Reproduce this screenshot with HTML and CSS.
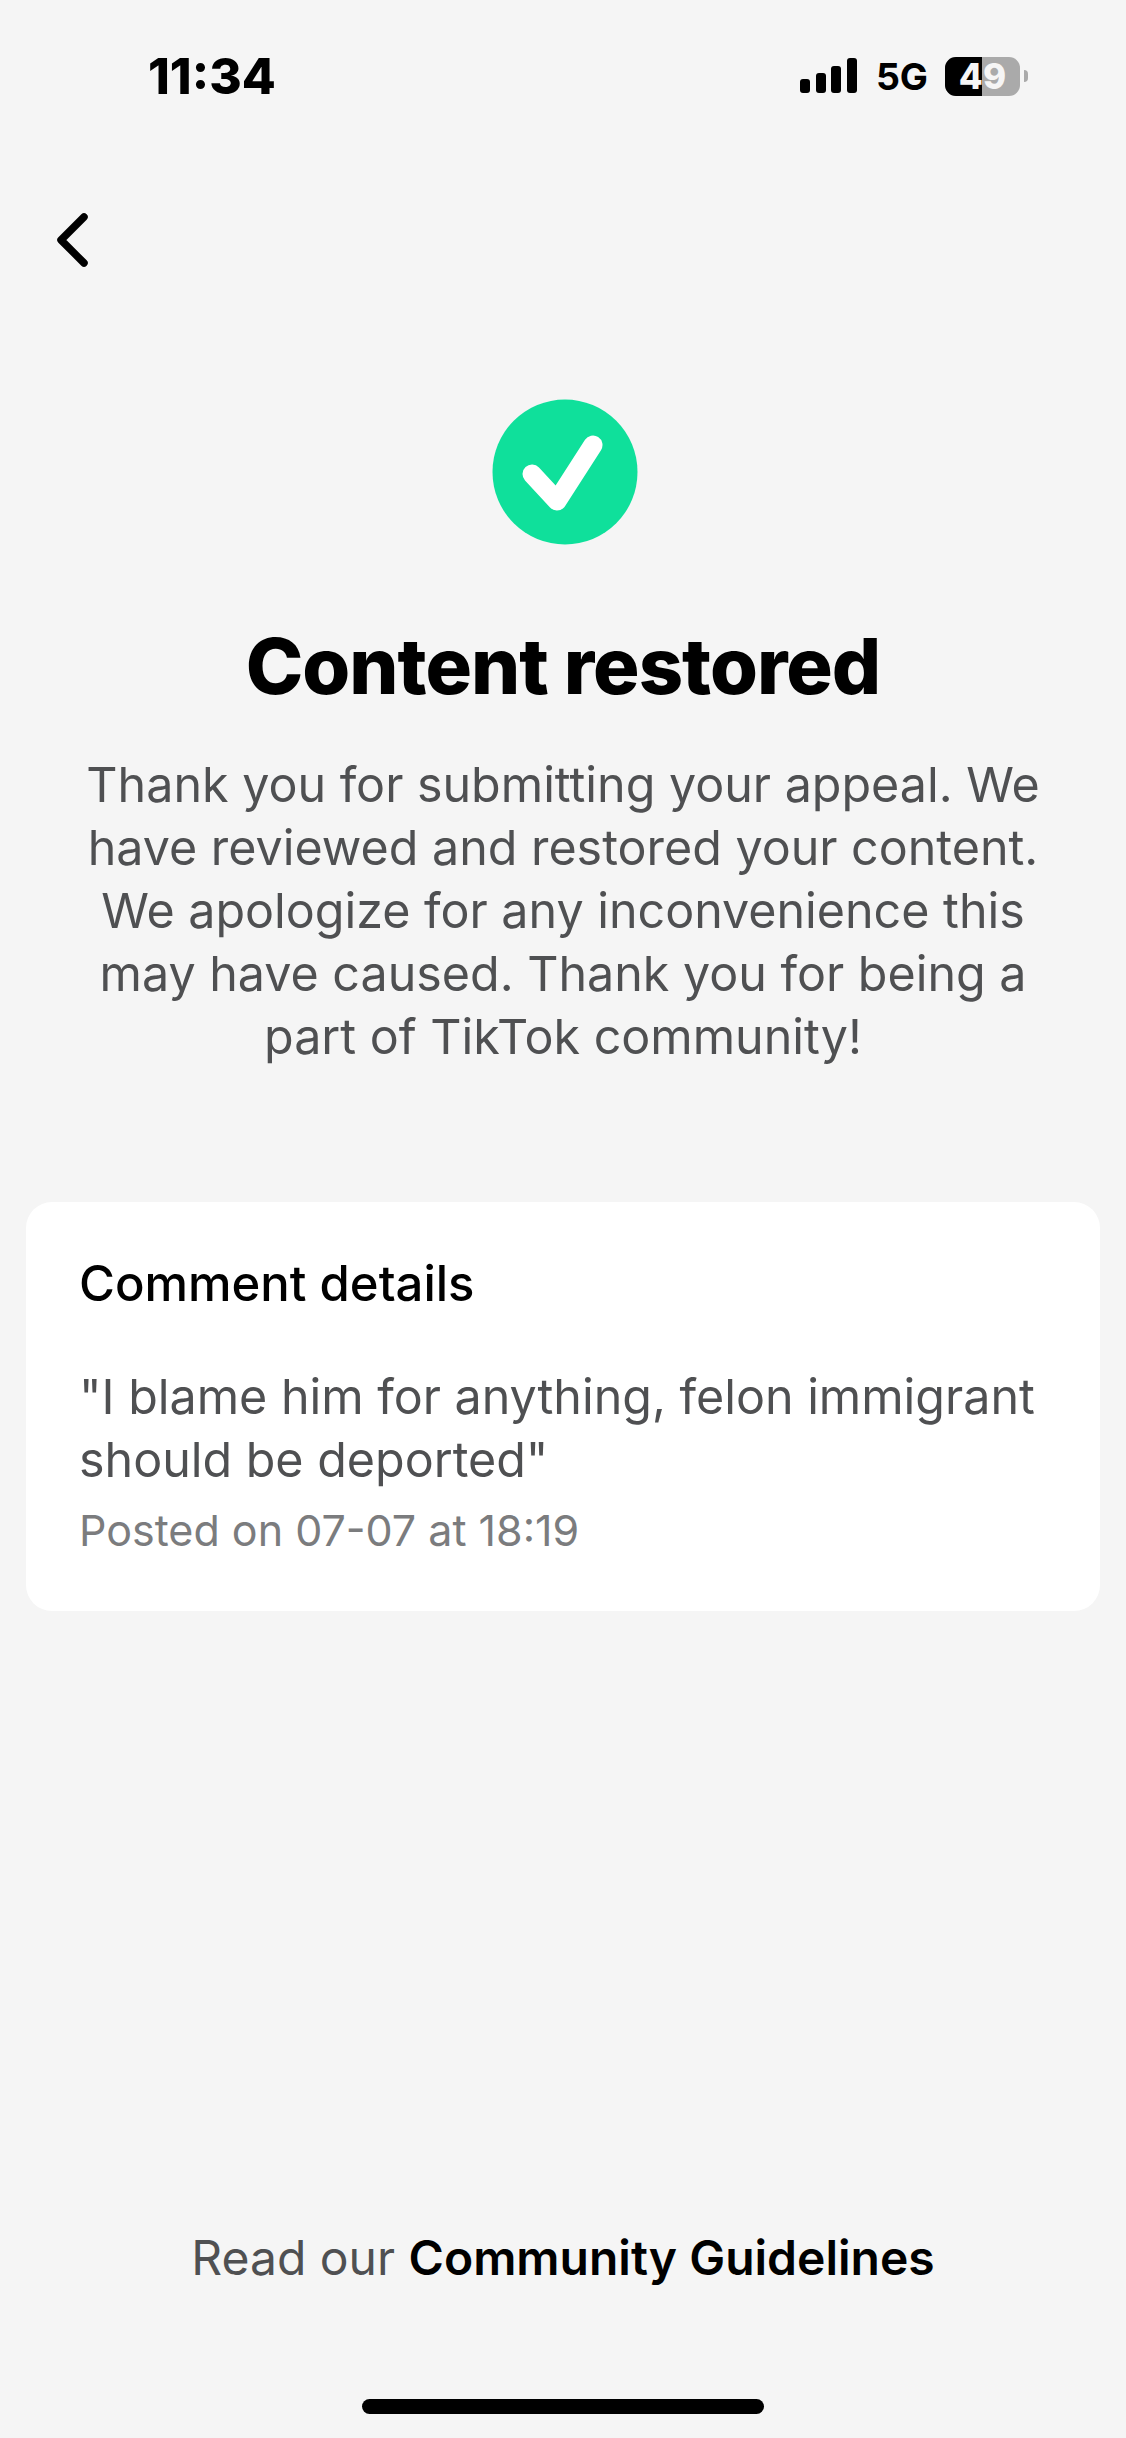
FILE: index.html
```html
<!DOCTYPE html>
<html lang="en">
<head>
    <meta charset="utf-8">
    <meta name="viewport" content="width=device-width, initial-scale=1, shrink-to-fit=no">
    <title>Content restored</title>
    <link rel="stylesheet" href="styles.css">
</head>
<body>
<div class="page">
    <div class="status-bar">
        <span class="time">11:34</span>
        <div class="status-icons">
            <svg class="signal" width="58" height="36" viewBox="0 0 58 36">
                <rect x="0" y="21" width="10" height="14" rx="3"/>
                <rect x="16" y="15" width="10" height="20" rx="3"/>
                <rect x="31" y="8" width="10" height="27" rx="3"/>
                <rect x="47" y="0" width="10" height="35" rx="3"/>
            </svg>
            <span class="network">5G</span>
            <div class="battery">
                <div class="battery-body">
                    <div class="battery-fill"></div>
                    <span class="battery-level">49</span>
                </div>
                <div class="battery-cap"></div>
            </div>
        </div>
    </div>

    <div class="nav-bar">
        <svg class="back" width="40" height="60" viewBox="0 0 40 60">
            <path d="M32 9 L9 32 L32 55" fill="none" stroke="#000" stroke-width="7.5" stroke-linecap="round" stroke-linejoin="round"/>
        </svg>
    </div>

    <div class="result">
        <svg class="check" width="146" height="146" viewBox="0 0 146 146">
            <circle cx="73" cy="73" r="72.5" fill="#0fe09b"/>
            <path d="M40 75 L65 102 L101 46" fill="none" stroke="#fff" stroke-width="19" stroke-linecap="round" stroke-linejoin="round"/>
        </svg>
        <h1>Content restored</h1>
        <p class="message">Thank you for submitting your appeal. We have reviewed and restored your content. We apologize for any inconvenience this may have caused. Thank you for being a part of TikTok community!</p>
    </div>

    <div class="card">
        <h2>Comment details</h2>
        <p class="comment">"I blame him for anything, felon immigrant should be deported"</p>
        <p class="posted">Posted on 07-07 at 18:19</p>
    </div>

    <div class="footer">
        <p class="guidelines">Read our <strong>Community Guidelines</strong></p>
        <div class="home-indicator"></div>
    </div>
</div>
</body>
</html>
```

FILE: styles.css
```css
* {
    box-sizing: border-box;
    margin: 0;
    font-family: Inter, "Liberation Sans", sans-serif;
}

body {
    background-color: #f5f5f5;
}

.page {
    display: flex;
    flex-direction: column;
    height: 2438px;
}

.status-bar {
    display: flex;
    justify-content: space-between;
    align-items: center;
    height: 56px;
    margin-top: 48px;
    padding: 0 98px 0 148px;
}

.time {
    font-size: 49.5px;
    font-weight: 800;
    color: #000;
}

.status-icons {
    display: flex;
    align-items: center;
}

.signal {
    margin-right: 18px;
}

.network {
    font-size: 37.5px;
    font-weight: 700;
    color: #000;
    margin-right: 17px;
}

.battery {
    display: flex;
    align-items: center;
}

.battery-body {
    position: relative;
    display: flex;
    justify-content: center;
    align-items: center;
    width: 75px;
    height: 39px;
    border-radius: 11px;
    background-color: #aaa;
    overflow: hidden;
}

.battery-fill {
    position: absolute;
    left: 0;
    top: 0;
    bottom: 0;
    width: 37px;
    background-color: #000;
}

.battery-level {
    position: relative;
    font-size: 35px;
    font-weight: 800;
    color: #f5f5f5;
}

.battery-cap {
    width: 4px;
    height: 12px;
    margin-left: 4px;
    border-radius: 0 6px 6px 0;
    background-color: #aaa;
}

.nav-bar {
    padding: 104px 0 0 52px;
    height: 160px;
}

.back {
    display: block;
}

.result {
    display: flex;
    flex-direction: column;
    align-items: center;
    margin-top: 135px;
    padding: 0 60px;
}

.check {
    display: block;
    margin-left: 3px;
}

h1 {
    font-size: 77.5px;
    font-weight: 800;
    line-height: 88px;
    letter-spacing: -1px;
    color: #000;
    margin-top: 77px;
}

.message {
    font-size: 48.4px;
    line-height: 63px;
    color: #4f5052;
    text-align: center;
    margin-top: 43px;
}

.card {
    margin: 134px 26px 0;
    padding: 52px 53px 52px;
    height: 409px;
    border-radius: 26px;
    background-color: #fff;
}

h2 {
    font-size: 49px;
    font-weight: 500;
    line-height: 60px;
    color: #000;
}

.comment {
    font-size: 48.4px;
    line-height: 63px;
    color: #4f5052;
    margin-top: 51px;
}

.posted {
    font-size: 43px;
    line-height: 52px;
    color: #7b7c7e;
    margin-top: 13px;
}

.footer {
    display: flex;
    flex-direction: column;
    align-items: center;
    margin-top: auto;
    padding-bottom: 24px;
}

.guidelines {
    font-size: 48px;
    line-height: 60px;
    color: #4f5052;
}

.guidelines strong {
    font-weight: 600;
    color: #000;
}

.home-indicator {
    width: 402px;
    height: 15px;
    margin-top: 111px;
    border-radius: 8px;
    background-color: #000;
}
```
